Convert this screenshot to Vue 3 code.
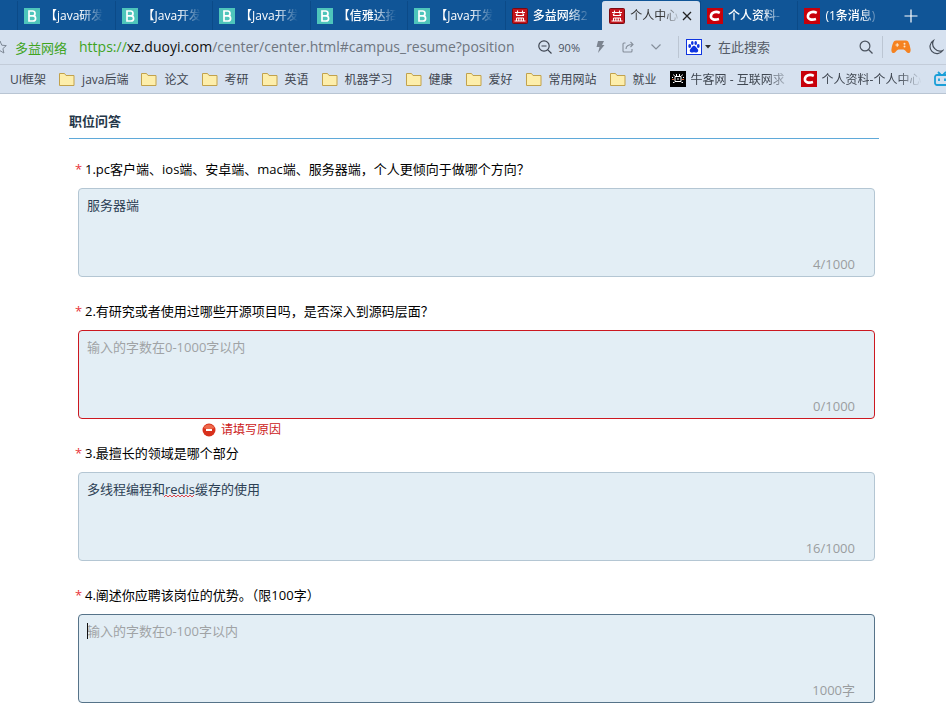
<script setup>
import { reactive } from 'vue'

const tabs = [
  { id: 1, icon: 'b', title: '【java研发' },
  { id: 2, icon: 'b', title: '【Java开发' },
  { id: 3, icon: 'b', title: '【Java开发' },
  { id: 4, icon: 'b', title: '【信雅达招' },
  { id: 5, icon: 'b', title: '【Java开发' },
  { id: 6, icon: 'yi', title: '多益网络2' },
  { id: 7, icon: 'yi', title: '个人中心', active: true },
  { id: 8, icon: 'c', title: '个人资料-' },
  { id: 9, icon: 'c', title: '(1条消息)' },
]

const folders = ['java后端', '论文', '考研', '英语', '机器学习', '健康', '爱好', '常用网站', '就业']

const questions = reactive([
  { id: 'q1', label: '1.pc客户端、ios端、安卓端、mac端、服务器端，个人更倾向于做哪个方向？', value: '服务器端', hint: '输入的字数在0-1000字以内', count: '4/1000', error: '' },
  { id: 'q2', label: '2.有研究或者使用过哪些开源项目吗，是否深入到源码层面？', value: '', hint: '输入的字数在0-1000字以内', count: '0/1000', error: '请填写原因' },
  { id: 'q3', label: '3.最擅长的领域是哪个部分', value: '多线程编程和redis缓存的使用', hint: '输入的字数在0-1000字以内', count: '16/1000', error: '', misspelt: true },
  { id: 'q4', label: '4.阐述你应聘该岗位的优势。（限100字）', value: '', hint: '输入的字数在0-100字以内', count: '1000字', error: '', focused: true },
])
</script>

<template>
  <div class="window">
    <header>
      <nav class="tabs" aria-label="标签页">
        <div class="tab-list">
          <div v-for="t in tabs" :key="t.id" class="tab" :class="{ active: t.active }">
            <button type="button" class="tab-button">
              <svg v-if="t.icon === 'b'" class="fav" viewBox="0 0 16 16">
                <rect width="16" height="16" fill="#4ec5bb" />
                <path d="M5 3h3.6a2.3 2.3 0 0 1 0 4.8H5zM5 7.8h4a2.6 2.6 0 0 1 0 5.2H5z" fill="none" stroke="#fff" stroke-width="1.700" />
              </svg>
              <svg v-else-if="t.icon === 'yi'" class="fav" viewBox="0 0 16 16">
                <rect x=".5" y=".5" width="15" height="15" rx="1" fill="#c4141c" stroke="#7c0a10" />
                <path d="M5.500 2.500v2M10.500 2.500v2M3 4.500h10M4 7.500h8M5.500 5.500L4 7M10.500 5.500L12 7M4.500 10v3M6.800 10v3M9.200 10v3M11.500 10v3M4.500 10h7M2.500 13h11" fill="none" stroke="#fff" stroke-width="1.100" />
              </svg>
              <svg v-else class="fav" viewBox="0 0 16 16">
                <rect width="16" height="16" fill="#c8000a" />
                <path d="M12.800 4.800C9 3 4.300 4 3.900 8c-.3 3.800 4 4.200 8.100 3" fill="none" stroke="#fff" stroke-width="2.600" />
              </svg>
              <span class="tab-title">{{ t.title }}</span>
            </button>
            <button v-if="t.active" type="button" class="close" aria-label="关闭">
              <svg width="10" height="10" viewBox="0 0 10 10"><path d="M1 1l8 8M9 1L1 9" stroke="#222" stroke-width="1.300" /></svg>
            </button>
          </div>
        </div>
        <button type="button" class="new-tab" aria-label="新标签页">
          <svg width="14" height="14" viewBox="0 0 14 14"><path d="M7 .5v13M.5 7h13" stroke="#fff" stroke-width="1.200" /></svg>
        </button>
      </nav>

      <div class="address">
        <button type="button" class="star" aria-label="收藏">
          <svg width="14" height="14" viewBox="0 0 14 14"><path d="M7 1l1.800 4.200 4.500.400-3.400 3 1 4.400L7 10.700 3.100 13l1-4.400-3.400-3 4.500-.400z" fill="none" stroke="#7d8794" /></svg>
        </button>
        <span class="site">多益网络</span>
        <div class="url" role="textbox" aria-label="地址"><span class="scheme">https://</span><span class="host">xz.duoyi.com</span>/center/center.html#campus_resume?position</div>
        <button type="button" class="zoom">
          <svg width="14" height="14" viewBox="0 0 14 14" fill="none" stroke="#3d4450" stroke-width="1.200"><circle cx="6" cy="6" r="5.200" /><path d="M3.500 6h5M9.800 9.800l3.700 3.700" /></svg>
          <span>90%</span>
        </button>
        <div class="tools">
          <button type="button" aria-label="极速模式">
            <svg width="12" height="14" viewBox="0 0 12 14"><path d="M4 1h6L8 5h2.500L4 13l1.500-6H2.500z" fill="#7c8490" /></svg>
          </button>
          <button type="button" aria-label="分享">
            <svg width="12" height="12" viewBox="0 0 12 12" fill="none" stroke="#858e9a" stroke-width="1.100"><path d="M3.500 2H2a1 1 0 0 0-1 1v7a1 1 0 0 0 1 1h7a1 1 0 0 0 1-1V8M4 8c0-3 2-4.500 7-4.500M8.500 1L11 3.500 8.500 6" /></svg>
          </button>
          <button type="button" aria-label="更多">
            <svg width="12" height="8" viewBox="0 0 12 8"><path d="M1.500 1.500L6 6l4.500-4.500" fill="none" stroke="#858e9a" stroke-width="1.200" /></svg>
          </button>
        </div>
        <div class="search">
          <button type="button" class="engine" aria-label="搜索引擎">
            <svg width="16" height="16" viewBox="0 0 16 16">
              <rect x=".5" y=".5" width="15" height="15" fill="#fff" stroke="#0f35e0" />
              <g fill="#0f35e0"><ellipse cx="3.700" cy="7" rx="1.400" ry="1.900" /><ellipse cx="6.300" cy="4" rx="1.300" ry="1.900" /><ellipse cx="9.700" cy="4" rx="1.300" ry="1.900" /><ellipse cx="12.300" cy="7" rx="1.400" ry="1.900" /><path d="M8 6.800c1.600 0 2 1.700 3.200 2.700 1.800 1.600 1.100 4-1 4-1 0-1.300-.300-2.200-.300s-1.200.300-2.200.300c-2.100 0-2.800-2.400-1-4C6 8.500 6.400 6.800 8 6.800z" /></g>
            </svg>
            <svg width="6" height="4" viewBox="0 0 6 4"><path d="M0 0h6L3 3.500z" fill="#333" /></svg>
          </button>
          <input type="text" placeholder="在此搜索" aria-label="搜索" />
          <button type="button" aria-label="开始搜索">
            <svg width="14" height="14" viewBox="0 0 14 14" fill="none" stroke="#4b535f" stroke-width="1.200"><circle cx="6" cy="6" r="4.900" /><path d="M9.500 9.500l4 4" /></svg>
          </button>
        </div>
        <button type="button" class="game" aria-label="游戏">
          <svg width="20" height="14" viewBox="0 0 20 14"><path d="M5 .5h10c2.500 0 3.500 3 4.500 8.500.800 4-2.500 5-4 3C14 10 13 9.500 11.500 9.500h-3C7 9.500 6 10 4.500 12c-1.500 2-4.800 1-4-3C1.500 3.500 2.500.5 5 .5z" fill="#f58220" /><path d="M4.500 5h3.500M6.250 3.250v3.500" stroke="#fde6c8" stroke-width="1.200" /><circle cx="13.500" cy="3.800" r="1" fill="#fde6c8" /><circle cx="13.500" cy="6.500" r="1" fill="#fde6c8" /></svg>
        </button>
        <button type="button" class="moon" aria-label="夜间模式">
          <svg width="17" height="17" viewBox="0 0 17 17"><path d="M6.500 1.500A7 7 0 1 0 15.800 11.500 7.300 7.300 0 0 1 6.500 1.500z" fill="none" stroke="#454d59" stroke-width="1.200" /></svg>
        </button>
      </div>

      <nav class="bookmarks" aria-label="书签">
        <a href="#" class="mark first"><span>UI框架</span></a>
        <a v-for="f in folders" :key="f" href="#" class="mark">
          <svg width="16" height="14" viewBox="0 0 16 14"><path d="M.5 1.500h5l1.500 2h8v10H.5z" fill="#fdeeab" stroke="#c2a24c" /></svg>
          <span>{{ f }}</span>
        </a>
        <a href="#" class="mark site-mark">
          <svg width="16" height="16" viewBox="0 0 16 16"><rect width="16" height="16" fill="#000" /><path d="M3.500 3.500l1 1.500M6.500 3v2M9.500 3v2M12.500 3.500l-1 1.500M5 5.500h6v5H5zM2.500 6v1M13.500 6v1M3 11.500h1.500M11.500 11.500H13M8 7v2" fill="none" stroke="#fff" /><path d="M2 8.500h2M12 8.500h2" stroke="#e06030" /></svg>
          <span>牛客网 - 互联网求</span>
        </a>
        <a href="#" class="mark site-mark">
          <svg width="16" height="16" viewBox="0 0 16 16"><rect width="16" height="16" fill="#c8000a" /><path d="M12.800 4.800C9 3 4.300 4 3.900 8c-.3 3.800 4 4.200 8.100 3" fill="none" stroke="#fff" stroke-width="2.600" /></svg>
          <span>个人资料-个人中心</span>
        </a>
        <a href="#" class="mark" aria-label="哔哩哔哩">
          <svg width="16" height="16" viewBox="0 0 16 16" fill="none" stroke="#1b9fd8" stroke-width="1.800"><rect x="1" y="4" width="14" height="10" rx="2" /><path d="M4 1l2.500 2.500M12 1L9.500 3.500M5 7.500v2.500M11 7.500v2.500" /></svg>
        </a>
      </nav>
    </header>

    <main>
      <h1>职位问答</h1>
      <form @submit.prevent>
        <div v-for="q in questions" :key="q.id" class="question">
          <label :for="q.id"><span class="required">*</span>{{ q.label }}</label>
          <div class="field">
            <textarea
              :id="q.id"
              v-model="q.value"
              :class="{ invalid: q.error, focused: q.focused }"
              :placeholder="q.hint"
              spellcheck="false"
            ></textarea>
            <svg v-if="q.misspelt" class="squiggle" width="30" height="4" viewBox="0 0 30 4"><path d="M0 3l2-2 2 2 2-2 2 2 2-2 2 2 2-2 2 2 2-2 2 2 2-2 2 2 2-2 2 2 2-2" fill="none" stroke="#e0454c" /></svg>
            <span v-if="q.focused" class="caret"></span>
            <span class="count">{{ q.count }}</span>
          </div>
          <div class="foot">
            <p v-if="q.error" class="error">
              <svg width="14" height="14" viewBox="0 0 14 14"><circle cx="7" cy="7" r="6.500" fill="#d8301c" /><path d="M1.500 5a6 6 0 0 1 11 0c-3 1.500-8 1.500-11 0z" fill="#ee6a4c" /><path d="M4 7h6" stroke="#fff" stroke-width="2" /></svg>
              {{ q.error }}
            </p>
          </div>
        </div>
      </form>
    </main>
  </div>
</template>

<style>
body {
  margin: 0;
  background: #fff;
  overflow-x: hidden;
}
</style>

<style scoped>
.window {
  font-family: "Open Sans", "Noto Sans CJK SC", sans-serif;
  font-size: 13px;
  overflow: hidden;
}
button {
  border: 0;
  padding: 0;
  background: none;
  font: inherit;
  color: inherit;
  display: flex;
  align-items: center;
  flex: none;
}
svg {
  display: block;
  flex: none;
}
.tabs {
  display: flex;
  height: 30px;
  box-sizing: border-box;
  padding: 1px 0 0 17px;
  background: #105597;
  color: #fff;
  font-size: 12px;
  font-weight: 500;
}
.tab-list {
  flex: 1;
  min-width: 0;
  display: grid;
  grid-template-columns: repeat(9, minmax(0, 1fr));
}
.tab {
  display: flex;
  align-items: center;
  padding: 0 6px;
  border-left: 1px solid #0b4a88;
}
.tab.active {
  padding-right: 8px;
  background: #d6e1ef;
  border-color: #d6e1ef;
  border-radius: 3px 3px 0 0;
  color: #333;
  font-weight: 400;
}
.tab-button {
  flex: 1;
  min-width: 0;
  gap: 5px;
}
.fav {
  width: 16px;
  height: 16px;
}
.tab-title {
  line-height: 20px;
  white-space: nowrap;
  text-align: left;
  mask-image: linear-gradient(to right, #000 34px, transparent 58px);
}
.active .tab-title {
  mask-image: linear-gradient(to right, #000 32px, transparent 52px);
}
.new-tab {
  width: 51px;
  padding-left: 9px;
}
.address {
  display: flex;
  align-items: center;
  height: 34px;
  background: #d6e1ef;
  border-bottom: 1px solid #c3ccd9;
  color: #6f7680;
}
.star {
  margin-left: -7px;
}
.site {
  flex: none;
  margin-left: 8px;
  color: #3fa41e;
}
.url {
  flex: 1;
  min-width: 0;
  margin-left: 12px;
  font-size: 14px;
  line-height: 24px;
  white-space: nowrap;
  overflow: hidden;
}
.scheme {
  color: #3fa41e;
}
.host {
  color: #111;
}
.zoom {
  margin-left: 20px;
  gap: 6px;
  font-size: 11px;
  color: #4b535f;
}
.tools {
  display: flex;
  align-items: center;
  gap: 16px;
  margin: 0 16px 0 14px;
}
.search {
  display: flex;
  align-items: center;
  width: 187px;
  padding: 0 9px 0 7px;
  border: solid #bcc6d3;
  border-width: 0 1px;
  height: 22px;
}
.engine {
  gap: 3px;
}
.search input {
  flex: 1;
  min-width: 0;
  border: 0;
  padding: 0 0 0 7px;
  background: none;
  outline: none;
  font: inherit;
}
.search input::placeholder {
  color: #555c67;
}
.game {
  margin-left: 8px;
}
.moon {
  margin-left: 16px;
  width: 19px;
}
.bookmarks {
  display: flex;
  align-items: center;
  gap: 13px;
  height: 28px;
  background: #d6e1ef;
  border-bottom: 1px solid #b9c5d3;
  font-size: 12px;
  overflow: hidden;
}
.mark {
  display: flex;
  align-items: center;
  flex: none;
  gap: 7px;
  color: #3f4650;
  text-decoration: none;
  white-space: nowrap;
}
.first {
  margin-left: 10px;
}
.site-mark {
  gap: 5px;
}
.site-mark span {
  min-width: 97px;
  mask-image: linear-gradient(to right, #000 76px, transparent 100px);
}
main {
  padding: 17px 67px 0 69px;
}
h1 {
  margin: 0;
  padding-bottom: 7px;
  border-bottom: 1px solid #5fa9d9;
  font-size: 13px;
  line-height: 20px;
  font-weight: 700;
  color: #26384a;
}
form {
  padding: 20px 4px 0 9px;
}
.question label {
  display: block;
  margin: 0 0 9px -3px;
  line-height: 20px;
  color: #000;
}
.required {
  display: inline-block;
  width: 10px;
  color: #e8333a;
}
.field {
  position: relative;
}
textarea {
  display: block;
  box-sizing: border-box;
  width: 100%;
  height: 89px;
  padding: 6px 8px;
  border: 1px solid #b4c6d3;
  border-radius: 4px;
  background: #e3eef5;
  outline: none;
  resize: none;
  font: inherit;
  line-height: 20px;
  color: #2c4054;
}
textarea::placeholder {
  color: #a0a3a5;
}
textarea.invalid {
  border-color: #cc1820;
}
textarea.focused {
  border-color: #567389;
}
.squiggle {
  position: absolute;
  left: 86px;
  top: 22px;
}
.caret {
  position: absolute;
  left: 9px;
  top: 9px;
  width: 1px;
  height: 16px;
  background: #111;
}
.count {
  position: absolute;
  right: 20px;
  bottom: 3px;
  line-height: 20px;
  color: #9a9d9f;
}
.foot {
  min-height: 24px;
}
.error {
  display: flex;
  align-items: center;
  gap: 5px;
  margin: 0 0 0 124px;
  font-size: 12px;
  line-height: 22px;
  color: #cc1820;
}
</style>
